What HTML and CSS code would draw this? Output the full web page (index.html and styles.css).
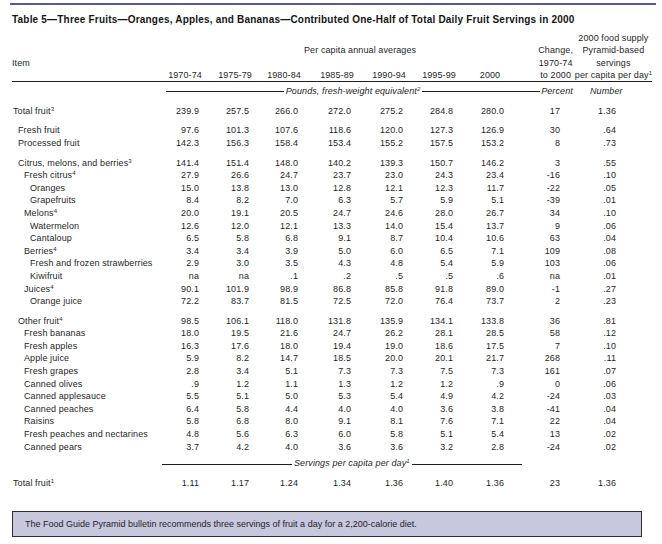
FILE: index.html
```html
<!DOCTYPE html>
<html lang="en">
<head>
<meta charset="utf-8">
<title>Table 5</title>
<link rel="stylesheet" href="styles.css">
</head>
<body>
<div class="page">
  <div class="topbar"></div>
  <h1 class="title">Table 5—Three Fruits—Oranges, Apples, and Bananas—Contributed One-Half of Total Daily Fruit Servings in 2000</h1>
  <table class="tbl">
    <colgroup>
      <col class="c-label"><col class="c-a"><col class="c-a"><col class="c-b"><col class="c-c"><col class="c-d"><col class="c-a"><col class="c-e"><col class="c-chg"><col class="c-num">
    </colgroup>
    <thead>
      <tr class="h1">
        <th class="item" rowspan="2">Item</th>
        <th></th><th></th><th></th>
        <th class="percap" colspan="4">Per capita annual averages</th>
        <th class="chg" rowspan="2"><span class="stack">Change,<br>1970-74<br>to 2000</span></th>
        <th class="nhd" rowspan="2"><span class="stack">2000 food supply<br>Pyramid-based<br>servings<br>per capita per day<sup>1</sup></span></th>
      </tr>
      <tr class="h2">
        <th><span class="yr">1970-74</span></th>
        <th><span class="yr">1975-79</span></th>
        <th><span class="yr">1980-84</span></th>
        <th><span class="yr">1985-89</span></th>
        <th><span class="yr">1990-94</span></th>
        <th><span class="yr">1995-99</span></th>
        <th><span class="yr">2000</span></th>
      </tr>
    </thead>
    <tbody>
      <tr class="unit">
        <td colspan="10">
          <div class="unit-row">
            <div class="span pounds"><span class="ln"></span><em>Pounds, fresh-weight equivalent<sup>2</sup></em><span class="ln"></span></div>
            <em class="pct">Percent</em>
            <em class="numu">Number</em>
          </div>
        </td>
      </tr>
      <tr class="g first"><td class="l0">Total fruit<sup>3</sup></td><td>239.9</td><td>257.5</td><td>266.0</td><td>272.0</td><td>275.2</td><td>284.8</td><td>280.0</td><td>17</td><td>1.36</td></tr>
      <tr class="g"><td class="l1">Fresh fruit</td><td>97.6</td><td>101.3</td><td>107.6</td><td>118.6</td><td>120.0</td><td>127.3</td><td>126.9</td><td>30</td><td>.64</td></tr>
      <tr><td class="l1">Processed fruit</td><td>142.3</td><td>156.3</td><td>158.4</td><td>153.4</td><td>155.2</td><td>157.5</td><td>153.2</td><td>8</td><td>.73</td></tr>
      <tr class="g"><td class="l1">Citrus, melons, and berries<sup>3</sup></td><td>141.4</td><td>151.4</td><td>148.0</td><td>140.2</td><td>139.3</td><td>150.7</td><td>146.2</td><td>3</td><td>.55</td></tr>
      <tr><td class="l2">Fresh citrus<sup>4</sup></td><td>27.9</td><td>26.6</td><td>24.7</td><td>23.7</td><td>23.0</td><td>24.3</td><td>23.4</td><td>-16</td><td>.10</td></tr>
      <tr><td class="l3">Oranges</td><td>15.0</td><td>13.8</td><td>13.0</td><td>12.8</td><td>12.1</td><td>12.3</td><td>11.7</td><td>-22</td><td>.05</td></tr>
      <tr><td class="l3">Grapefruits</td><td>8.4</td><td>8.2</td><td>7.0</td><td>6.3</td><td>5.7</td><td>5.9</td><td>5.1</td><td>-39</td><td>.01</td></tr>
      <tr><td class="l2">Melons<sup>4</sup></td><td>20.0</td><td>19.1</td><td>20.5</td><td>24.7</td><td>24.6</td><td>28.0</td><td>26.7</td><td>34</td><td>.10</td></tr>
      <tr><td class="l3">Watermelon</td><td>12.6</td><td>12.0</td><td>12.1</td><td>13.3</td><td>14.0</td><td>15.4</td><td>13.7</td><td>9</td><td>.06</td></tr>
      <tr><td class="l3">Cantaloup</td><td>6.5</td><td>5.8</td><td>6.8</td><td>9.1</td><td>8.7</td><td>10.4</td><td>10.6</td><td>63</td><td>.04</td></tr>
      <tr><td class="l2">Berries<sup>4</sup></td><td>3.4</td><td>3.4</td><td>3.9</td><td>5.0</td><td>6.0</td><td>6.5</td><td>7.1</td><td>109</td><td>.08</td></tr>
      <tr><td class="l3">Fresh and frozen strawberries</td><td>2.9</td><td>3.0</td><td>3.5</td><td>4.3</td><td>4.8</td><td>5.4</td><td>5.9</td><td>103</td><td>.06</td></tr>
      <tr><td class="l3">Kiwifruit</td><td>na</td><td>na</td><td>.1</td><td>.2</td><td>.5</td><td>.5</td><td>.6</td><td>na</td><td>.01</td></tr>
      <tr><td class="l2">Juices<sup>4</sup></td><td>90.1</td><td>101.9</td><td>98.9</td><td>86.8</td><td>85.8</td><td>91.8</td><td>89.0</td><td>-1</td><td>.27</td></tr>
      <tr><td class="l3">Orange juice</td><td>72.2</td><td>83.7</td><td>81.5</td><td>72.5</td><td>72.0</td><td>76.4</td><td>73.7</td><td>2</td><td>.23</td></tr>
      <tr class="g"><td class="l1">Other fruit<sup>4</sup></td><td>98.5</td><td>106.1</td><td>118.0</td><td>131.8</td><td>135.9</td><td>134.1</td><td>133.8</td><td>36</td><td>.81</td></tr>
      <tr><td class="l2">Fresh bananas</td><td>18.0</td><td>19.5</td><td>21.6</td><td>24.7</td><td>26.2</td><td>28.1</td><td>28.5</td><td>58</td><td>.12</td></tr>
      <tr><td class="l2">Fresh apples</td><td>16.3</td><td>17.6</td><td>18.0</td><td>19.4</td><td>19.0</td><td>18.6</td><td>17.5</td><td>7</td><td>.10</td></tr>
      <tr><td class="l2">Apple juice</td><td>5.9</td><td>8.2</td><td>14.7</td><td>18.5</td><td>20.0</td><td>20.1</td><td>21.7</td><td>268</td><td>.11</td></tr>
      <tr><td class="l2">Fresh grapes</td><td>2.8</td><td>3.4</td><td>5.1</td><td>7.3</td><td>7.3</td><td>7.5</td><td>7.3</td><td>161</td><td>.07</td></tr>
      <tr><td class="l2">Canned olives</td><td>.9</td><td>1.2</td><td>1.1</td><td>1.3</td><td>1.2</td><td>1.2</td><td>.9</td><td>0</td><td>.06</td></tr>
      <tr><td class="l2">Canned applesauce</td><td>5.5</td><td>5.1</td><td>5.0</td><td>5.3</td><td>5.4</td><td>4.9</td><td>4.2</td><td>-24</td><td>.03</td></tr>
      <tr><td class="l2">Canned peaches</td><td>6.4</td><td>5.8</td><td>4.4</td><td>4.0</td><td>4.0</td><td>3.6</td><td>3.8</td><td>-41</td><td>.04</td></tr>
      <tr><td class="l2">Raisins</td><td>5.8</td><td>6.8</td><td>8.0</td><td>9.1</td><td>8.1</td><td>7.6</td><td>7.1</td><td>22</td><td>.04</td></tr>
      <tr><td class="l2">Fresh peaches and nectarines</td><td>4.8</td><td>5.6</td><td>6.3</td><td>6.0</td><td>5.8</td><td>5.1</td><td>5.4</td><td>13</td><td>.02</td></tr>
      <tr><td class="l2">Canned pears</td><td>3.7</td><td>4.2</td><td>4.0</td><td>3.6</td><td>3.6</td><td>3.2</td><td>2.8</td><td>-24</td><td>.02</td></tr>
      <tr class="unit unit2">
        <td colspan="10">
          <div class="unit-row">
            <div class="span servings"><span class="ln ln-fixed"></span><em>Servings per capita per day<sup>1</sup></em><span class="ln"></span></div>
          </div>
        </td>
      </tr>
      <tr class="g"><td class="l0">Total fruit<sup>1</sup></td><td>1.11</td><td>1.17</td><td>1.24</td><td>1.34</td><td>1.36</td><td>1.40</td><td>1.36</td><td>23</td><td>1.36</td></tr>
    </tbody>
  </table>
  <div class="note">The Food Guide Pyramid bulletin recommends three servings of fruit a day for a 2,200-calorie diet.</div>
</div>
</body>
</html>
```

FILE: styles.css
```css
* { box-sizing: border-box; }

html, body {
  margin: 0;
  padding: 0;
  background: #ffffff;
}

body {
  font-family: "Liberation Sans", Arial, sans-serif;
  font-size: 9px;
  letter-spacing: 0.1px;
  color: #1f1f1f;
}

.page {
  padding: 3px 0 0 10px;
  width: 662px;
}

.topbar {
  width: 646px;
  height: 2px;
  background: #58589a;
}

.title {
  margin: 9px 0 0 2px;
  font-size: 10px;
  line-height: 12px;
  font-weight: bold;
  letter-spacing: 0.2px;
  color: #141414;
  white-space: nowrap;
}

.tbl {
  margin: 6px 0 0 2px;
  width: 640px;
  table-layout: fixed;
  border-collapse: separate;
  border-spacing: 0;
}

.c-label { width: 143px; }
.c-a { width: 50px; }
.c-b { width: 49px; }
.c-c { width: 53px; }
.c-d { width: 52px; }
.c-e { width: 51px; }
.c-chg { width: 64px; }
.c-num { width: 78px; }

th {
  font-weight: normal;
  padding: 0;
  line-height: 12.3px;
  vertical-align: bottom;
  white-space: nowrap;
}

.h2 th,
th.item,
th.chg,
th.nhd {
  border-bottom: 1px solid #1f1f1f;
}

.h2 th {
  text-align: right;
  padding-right: 3px;
}

.yr {
  display: inline-block;
  width: 34px;
  text-align: center;
}

th.item {
  text-align: left;
  padding: 0 0 12.3px 0;
}

th.percap {
  text-align: left;
}

th.chg {
  text-align: right;
  padding-right: 1px;
}

th.nhd {
  text-align: right;
  padding-right: 0;
}

.stack {
  display: inline-block;
  text-align: center;
}

sup {
  font-size: 6px;
  line-height: 0;
  vertical-align: 3px;
  letter-spacing: 0;
}

td {
  padding: 0 6px 0 0;
  line-height: 12.6px;
  text-align: right;
  white-space: nowrap;
  vertical-align: top;
}

td:nth-child(9) { padding-right: 14px; }
td:nth-child(10) { padding-right: 36px; }

tr.g td { padding-top: 7px; }
tr.g.first td { padding-top: 7.5px; }

td.l0, td.l1, td.l2, td.l3 { text-align: left; padding-right: 0; }
td.l0 { padding-left: 1px; }
td.l1 { padding-left: 6px; }
td.l2 { padding-left: 12px; }
td.l3 { padding-left: 18px; }

tr.unit td {
  padding: 2.5px 0 0 0;
  text-align: left;
}

tr.unit2 td {
  padding-top: 4px;
}

.unit-row {
  display: flex;
  align-items: center;
  height: 12.6px;
}

.span {
  display: flex;
  align-items: center;
  gap: 2px;
}

.pounds {
  margin-left: 154px;
  width: 374px;
}

.servings {
  margin-left: 150px;
  width: 360px;
}

.ln {
  flex: 1;
  height: 0;
  border-top: 1px solid #1f1f1f;
  margin-top: 2px;
}

.ln-fixed {
  flex: 0 0 130px;
}

.pct {
  margin-left: 1px;
  width: 32px;
  text-align: center;
}

.numu {
  margin-left: 17px;
  width: 32px;
  text-align: center;
}

.note {
  margin: 22px 0 0 2px;
  width: 630px;
  height: 26px;
  border: 1px solid #2e2e2e;
  background: #c7c7dd;
  padding-left: 12px;
  line-height: 24px;
  letter-spacing: 0;
  white-space: nowrap;
}
```
